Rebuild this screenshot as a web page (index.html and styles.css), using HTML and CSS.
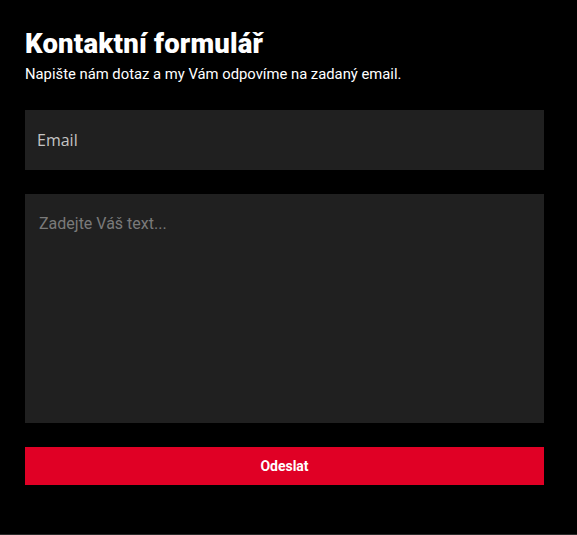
FILE: index.html
```html
<!DOCTYPE html>
<html lang="cs">
<head>
<meta charset="utf-8">
<title>Kontaktní formulář</title>
<link rel="stylesheet" href="styles.css">
</head>
<body>
<main class="page">
  <section class="contact">
    <h1 class="title">Kontaktní formulář</h1>
    <p class="lead">Napište nám dotaz a my Vám odpovíme na zadaný email.</p>
    <form class="form">
      <input class="field field-email" type="email" placeholder="Email">
      <textarea class="field field-text" placeholder="Zadejte Váš text..."></textarea>
      <button class="submit" type="button">Odeslat</button>
    </form>
  </section>
</main>
</body>
</html>
```
FILE: styles.css
```css
html, body {
  margin: 0;
  padding: 0;
  background: #000;
  height: 100%;
}
.page {
  box-sizing: border-box;
  height: 535px;
  border-bottom: 1px solid #2a2a2a;
  font-family: "Open Sans", "Liberation Sans", sans-serif;
  color: #fff;
}
.contact {
  width: 519px;
  margin-left: 25px;
  padding-top: 28px;
}
.title {
  margin: 0;
  font-family: "Roboto", "Liberation Sans", sans-serif;
  font-weight: 900;
  font-size: 27.5px;
  line-height: 32px;
  letter-spacing: 0.2px;
}
.lead {
  margin: 4px 0 0;
  font-family: "Roboto", "Liberation Sans", sans-serif;
  font-size: 14.8px;
  line-height: 20px;
}
.form {
  display: flex;
  flex-direction: column;
  gap: 24px;
  margin-top: 26px;
}
.field {
  display: block;
  box-sizing: border-box;
  width: 100%;
  margin: 0;
  border: 0;
  outline: none;
  background: #202020;
  color: #ddd;
  font-family: "Open Sans", "Liberation Sans", sans-serif;
  resize: none;
}
.field-email {
  height: 60px;
  padding: 0 12px;
  font-size: 16px;
}
.field-email::placeholder {
  color: #c4c4c4;
}
.field-text {
  height: 229px;
  padding: 19px 14px;
  font-family: "Roboto", "Liberation Sans", sans-serif;
  font-size: 16px;
  line-height: 22px;
}
.field-text::placeholder {
  color: #7a7a7a;
}
.submit {
  height: 38px;
  border: 0;
  margin: 0;
  background: #e00025;
  color: #fff;
  font-family: "Roboto", "Liberation Sans", sans-serif;
  font-weight: 700;
  font-size: 14px;
  cursor: pointer;
}
```
